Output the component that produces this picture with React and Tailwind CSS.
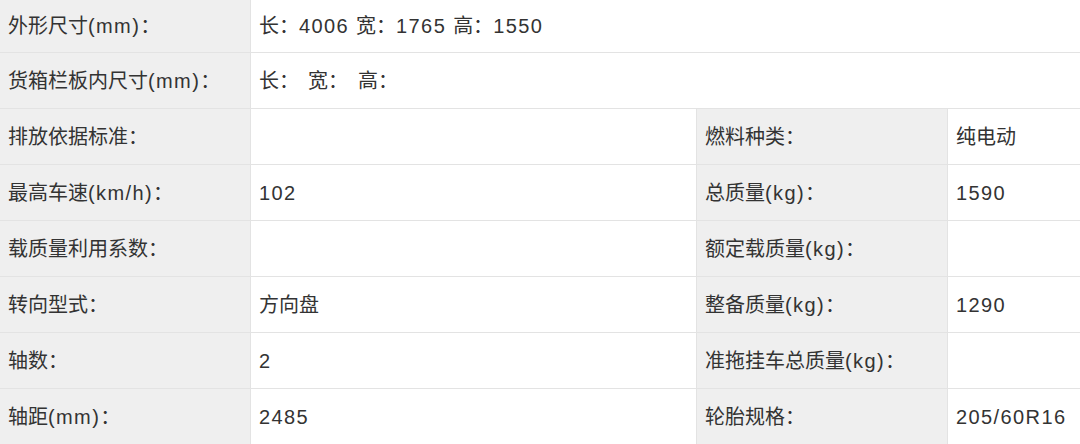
import React from 'react';

const rows = [
  ['排放依据标准：', '', '燃料种类：', '纯电动'],
  ['最高车速(km/h)：', '102', '总质量(kg)：', '1590'],
  ['载质量利用系数：', '', '额定载质量(kg)：', ''],
  ['转向型式：', '方向盘', '整备质量(kg)：', '1290'],
  ['轴数：', '2', '准拖挂车总质量(kg)：', ''],
  ['轴距(mm)：', '2485', '轮胎规格：', '205/60R16'],
];

// latin runs sit a bit wider than the CJK font's own digits
const Txt = ({ s }) =>
  s.split(/([\x20-\x7E]+)/).map((part, i) =>
    /[\x20-\x7E]/.test(part) ? (
      <span key={i} className="tracking-[1.4px]">{part}</span>
    ) : (
      <React.Fragment key={i}>{part}</React.Fragment>
    )
  );

const label = 'flex items-center bg-[#efefef] border-r border-[#e3e3e3] pl-2 whitespace-pre';
const value = 'flex items-center bg-white pl-2 whitespace-pre';

export default function App() {
  return (
    <div
      className="w-[1080px] h-[444px] overflow-hidden bg-white text-[20px] text-[#333333]"
      style={{ fontFamily: '"Liberation Sans", "Noto Sans CJK SC", sans-serif' }}
    >
      <div className="flex h-[53px] border-b border-[#e3e3e3]">
        <div className={`${label} w-[251px]`}><Txt s="外形尺寸(mm)：" /></div>
        <div className={`${value} flex-1`}><Txt s="长：4006 宽：1765 高：1550" /></div>
      </div>
      <div className="flex h-[56px] border-b border-[#e3e3e3]">
        <div className={`${label} w-[251px]`}><Txt s="货箱栏板内尺寸(mm)：" /></div>
        <div className={`${value} flex-1`}>
          <span>长：</span>
          <span className="ml-[9px]">宽：</span>
          <span className="ml-[10px]">高：</span>
        </div>
      </div>
      {rows.map(([k1, v1, k2, v2]) => (
        <div key={k1} className="flex h-[56px] border-b border-[#e3e3e3]">
          <div className={`${label} w-[251px]`}><Txt s={k1} /></div>
          <div className={`${value} w-[446px] border-r border-[#e3e3e3]`}><Txt s={v1} /></div>
          <div className={`${label} w-[251px]`}><Txt s={k2} /></div>
          <div className={`${value} flex-1`}><Txt s={v2} /></div>
        </div>
      ))}
    </div>
  );
}
